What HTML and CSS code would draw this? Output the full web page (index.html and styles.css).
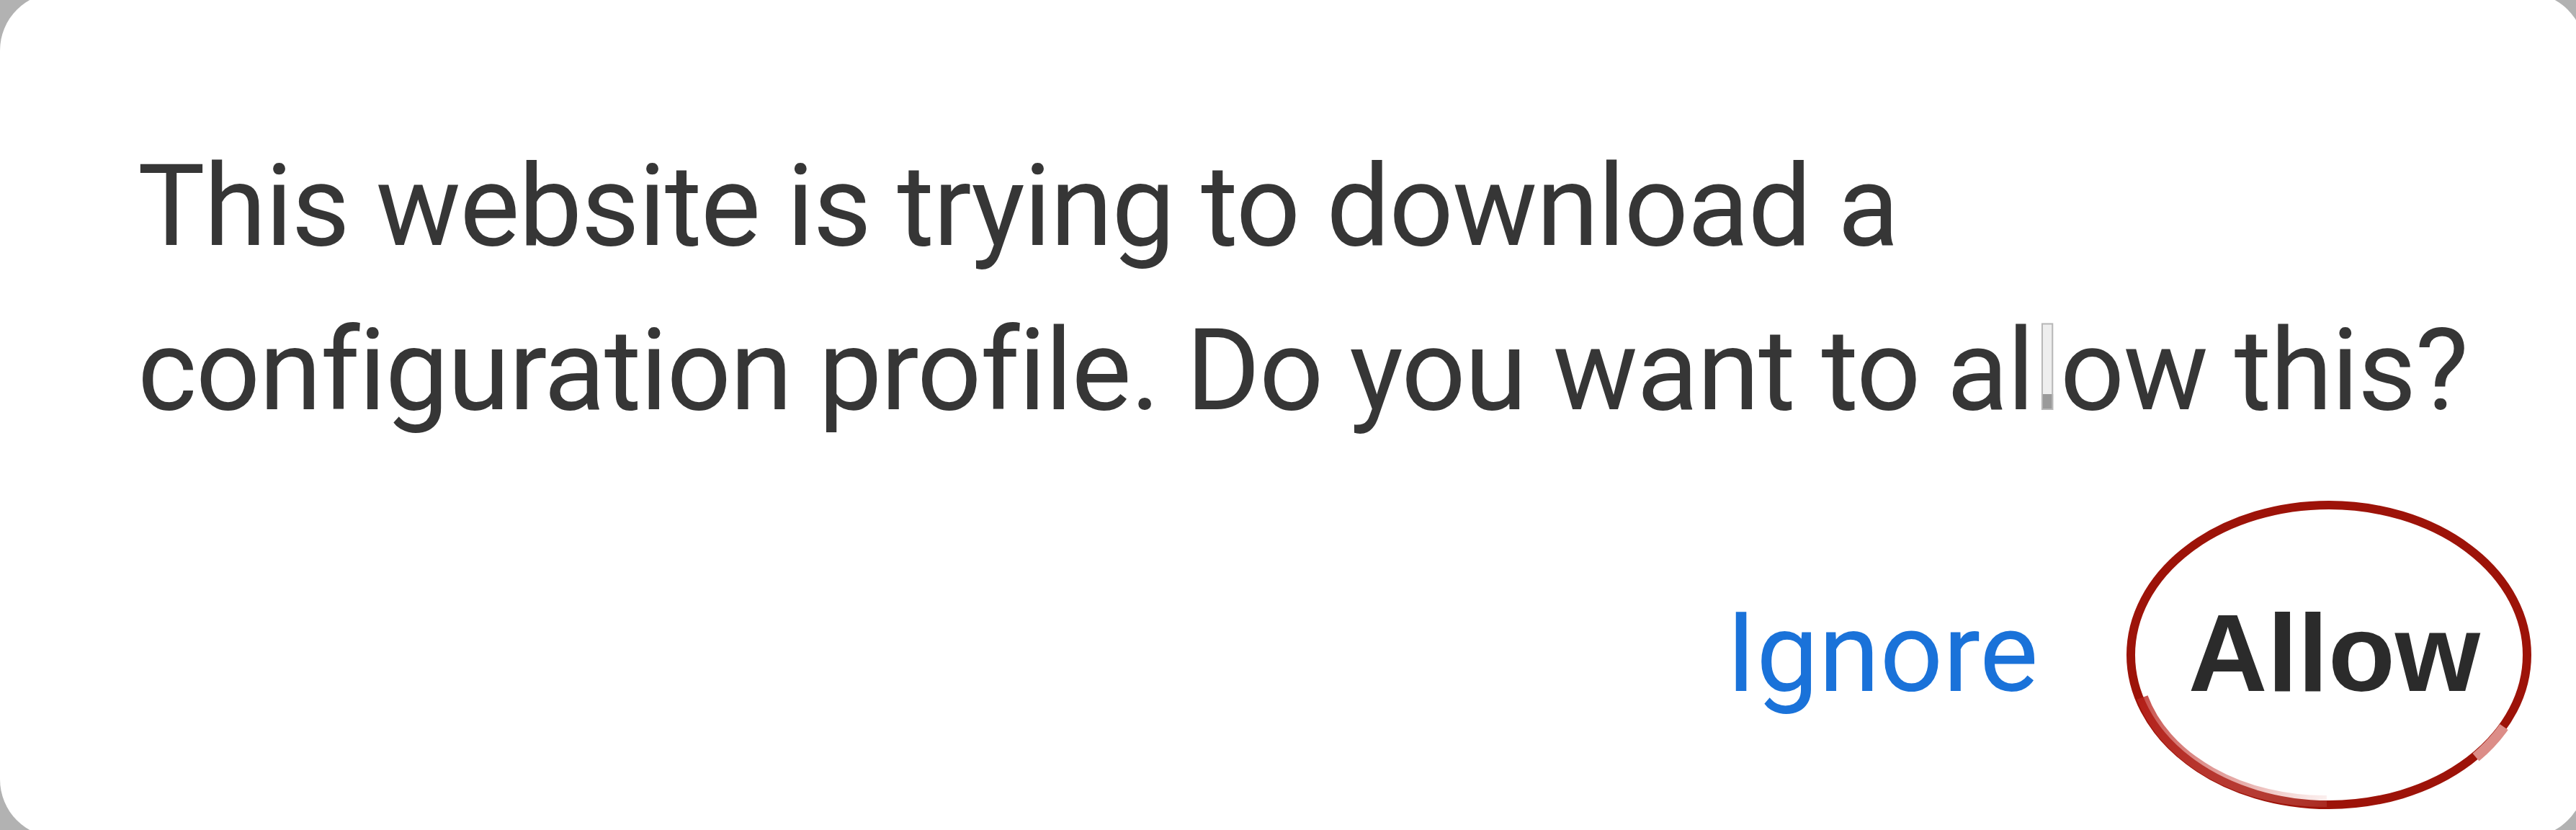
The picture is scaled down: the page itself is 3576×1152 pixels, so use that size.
FILE: index.html
```html
<!DOCTYPE html>
<html lang="en">
<head>
<meta charset="utf-8">
<title>Configuration profile</title>
<link rel="stylesheet" href="styles.css">
</head>
<body>
<div class="card">
  <p class="message">This website is trying to download a configuration profile. Do you want to al<span class="ghost">l</span>ow this?</p>
  <div class="actions">
    <span class="btn ignore">Ignore</span>
    <span class="btn allow">Allow<svg class="ring" width="620" height="480" viewBox="0 0 620 480" aria-hidden="true">
        <defs>
          <linearGradient id="smear" gradientUnits="userSpaceOnUse" x1="40" y1="280" x2="320" y2="440">
            <stop offset="0" stop-color="#b8201a" stop-opacity="0.8"/>
            <stop offset="0.6" stop-color="#d0625c" stop-opacity="0.5"/>
            <stop offset="1" stop-color="#eeb0aa" stop-opacity="0.1"/>
          </linearGradient>
        </defs>
        <ellipse cx="303" cy="229" rx="275" ry="208" fill="none" stroke="#9d1309" stroke-width="12"/>
        <path d="M44 288 A262 196 0 0 0 300 432" fill="none" stroke="url(#smear)" stroke-width="16"/>
        <path d="M546 329 A275 208 0 0 1 507 371" fill="none" stroke="#dc8d88" stroke-width="14"/>
      </svg></span>
  </div>
</div>
</body>
</html>
```
FILE: styles.css
```css
html, body {
  margin: 0;
  padding: 0;
}

body {
  background: #b2b2b2;
  overflow: hidden;
  height: 1152px;
}

.card {
  margin: -10px -12px 0 0;
  height: 1172px;
  box-sizing: border-box;
  background: #ffffff;
  border-radius: 80px;
  padding: 182px 145px 0 191px;
  display: flex;
  flex-direction: column;
}

.message {
  margin: 0;
  max-width: 3300px;
  font-family: "Roboto", "Inter", sans-serif;
  font-size: 157px;
  letter-spacing: -1.5px;
  line-height: 228px;
  color: #363636;
}

.ghost {
  color: transparent;
  background: linear-gradient(to bottom, #eeeeee 0, #eeeeee 68%, #9a9a9a 68%, #9a9a9a 80%, transparent 80%);
  -webkit-background-clip: text;
  background-clip: text;
  -webkit-text-stroke: 2px #b8b8b8;
}

.actions {
  margin-top: 178px;
  display: flex;
  justify-content: flex-end;
  align-items: baseline;
  gap: 208px;
}

.btn {
  line-height: 200px;
  white-space: nowrap;
}

.ignore {
  font-family: "Roboto", "Inter", sans-serif;
  font-size: 154px;
  letter-spacing: 0;
  color: #1a72d9;
}

.allow {
  position: relative;
  font-family: "Liberation Sans", Arial, sans-serif;
  font-weight: 700;
  font-size: 152px;
  color: #2b2b2b;
}

.ring {
  position: absolute;
  left: -108px;
  top: -126px;
  pointer-events: none;
}
```
